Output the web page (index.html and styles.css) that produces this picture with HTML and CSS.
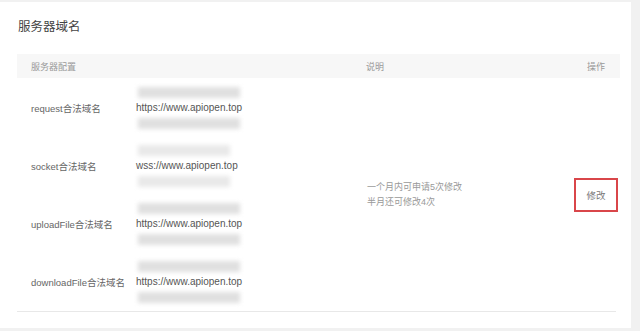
FILE: index.html
```html
<!DOCTYPE html>
<html lang="zh-CN">
<head>
    <meta charset="UTF-8">
    <meta name="viewport" content="width=device-width, initial-scale=1.0">
    <title>服务器域名</title>
    <link rel="stylesheet" href="styles.css">
</head>
<body>
    <section class="card">
        <h2 class="cardTitle">服务器域名</h2>
        <div class="domainTable">
            <div class="tableHead">
                <div class="colName">服务器配置</div>
                <div class="colValue"></div>
                <div class="colNote">说明</div>
                <div class="colAction">操作</div>
            </div>
            <div class="tableBody">
                <div class="cellName row1">request合法域名</div>
                <div class="cellValue row1">
                    <span class="hiddenLine"></span>
                    <span class="domain">https://www.apiopen.top</span>
                    <span class="hiddenLine"></span>
                </div>
                <div class="cellName row2">socket合法域名</div>
                <div class="cellValue row2">
                    <span class="hiddenLine short"></span>
                    <span class="domain">wss://www.apiopen.top</span>
                    <span class="hiddenLine short"></span>
                </div>
                <div class="cellName row3">uploadFile合法域名</div>
                <div class="cellValue row3">
                    <span class="hiddenLine"></span>
                    <span class="domain">https://www.apiopen.top</span>
                    <span class="hiddenLine"></span>
                </div>
                <div class="cellName row4">downloadFile合法域名</div>
                <div class="cellValue row4">
                    <span class="hiddenLine"></span>
                    <span class="domain">https://www.apiopen.top</span>
                    <span class="hiddenLine"></span>
                </div>
                <div class="cellNote">
                    <p>一个月内可申请5次修改</p>
                    <p>半月还可修改4次</p>
                </div>
                <div class="cellAction">
                    <button class="editButton">修改</button>
                </div>
            </div>
        </div>
    </section>
</body>
</html>
```

FILE: styles.css
```css
body {
    margin: 0;
    background-color: #f1f1f1;
    font-family: "Liberation Sans", "Noto Sans CJK SC", sans-serif;
}

.card {
    width: 614px;
    height: 326px;
    margin-top: 2px;
    padding-left: 17px;
    background-color: #ffffff;
}

.cardTitle {
    margin: 0;
    height: 52px;
    line-height: 51px;
    padding-left: 1px;
    font-size: 12.5px;
    font-weight: normal;
    color: #444;
}

.domainTable {
    width: 603px;
}

.tableHead,
.tableBody {
    display: grid;
    grid-template-columns: 118px 231px 208px 46px;
}

.tableHead {
    height: 24px;
    align-items: center;
    background-color: #f7f7f7;
    font-size: 9px;
    color: #999;
}

.colName {
    padding-left: 14px;
}

.colAction {
    padding-left: 13px;
}

.tableBody {
    grid-template-rows: repeat(4, 58px);
    margin-top: 1px;
    width: 599px;
    border-bottom: 1px solid #e8e8e8;
}

.cellName {
    grid-column: 1;
    display: flex;
    align-items: center;
    padding-left: 14px;
    font-size: 9.5px;
    color: #666;
}

.cellValue {
    grid-column: 2;
    display: flex;
    flex-direction: column;
    justify-content: center;
    gap: 3px;
}

.row1 { grid-row: 1; }
.row2 { grid-row: 2; }
.row3 { grid-row: 3; }
.row4 { grid-row: 4; }

.domain {
    padding-left: 1px;
    font-size: 10px;
    line-height: 14px;
    color: #555;
}

/* 打码的其他域名 */
.hiddenLine {
    display: block;
    width: 102px;
    height: 11px;
    margin-left: 3px;
    background-color: #e0e0e0;
    filter: blur(2px);
}

.hiddenLine.short {
    width: 92px;
    background-color: #e9e9e9;
}

.cellNote {
    grid-column: 3;
    grid-row: 1 / span 4;
    display: flex;
    flex-direction: column;
    justify-content: center;
    padding-left: 1px;
}

.cellNote p {
    margin: 0;
    font-size: 9px;
    line-height: 15px;
    color: #999;
}

.cellAction {
    grid-column: 4;
    grid-row: 1 / span 4;
    display: flex;
    align-items: center;
}

.editButton {
    width: 44px;
    height: 34px;
    padding: 0;
    border: 2px solid #d9464a;
    background-color: #fff;
    font-family: inherit;
    font-size: 9.5px;
    color: #777;
    cursor: pointer;
}
```
